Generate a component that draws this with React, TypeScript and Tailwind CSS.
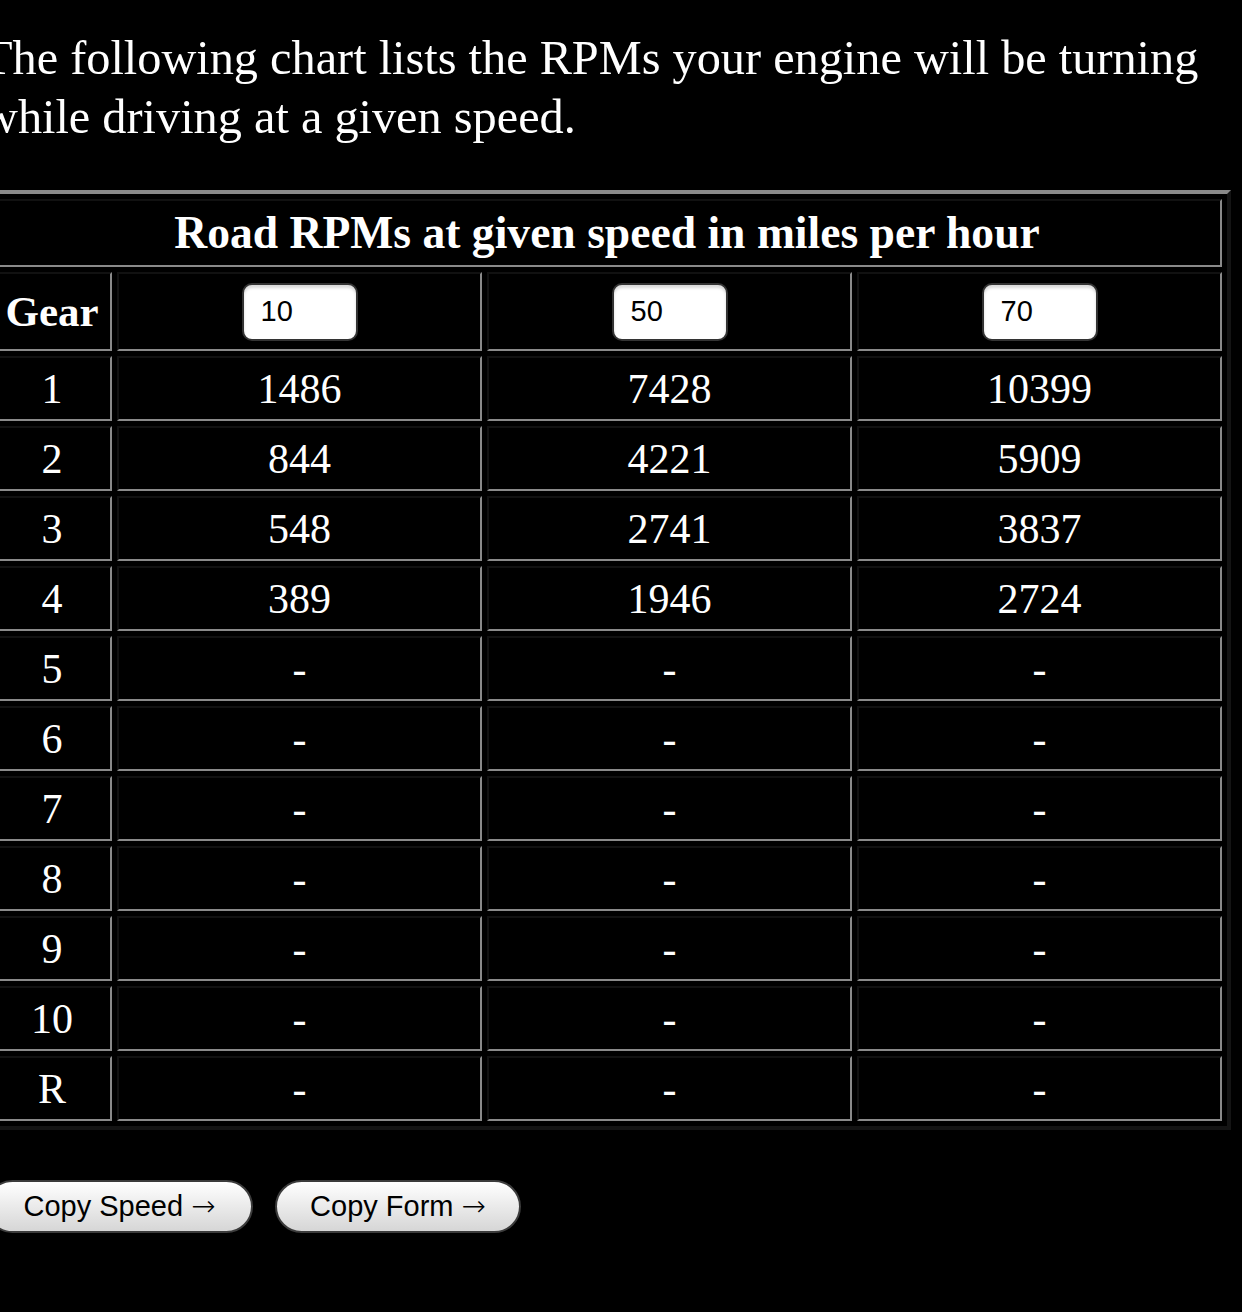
const speeds = ["10", "50", "70"];

const rows = [
  { gear: "1", rpm: ["1486", "7428", "10399"] },
  { gear: "2", rpm: ["844", "4221", "5909"] },
  { gear: "3", rpm: ["548", "2741", "3837"] },
  { gear: "4", rpm: ["389", "1946", "2724"] },
  { gear: "5", rpm: ["-", "-", "-"] },
  { gear: "6", rpm: ["-", "-", "-"] },
  { gear: "7", rpm: ["-", "-", "-"] },
  { gear: "8", rpm: ["-", "-", "-"] },
  { gear: "9", rpm: ["-", "-", "-"] },
  { gear: "10", rpm: ["-", "-", "-"] },
  { gear: "R", rpm: ["-", "-", "-"] },
];

// inset-looking cell border: dark top/left, grey bottom/right
const cell =
  "border-2 border-t-[#111] border-l-[#111] border-r-[#8a8a8a] border-b-[#8a8a8a] p-0 text-center align-middle";

function PillButton({ label, width }: { label: string; width: string }) {
  return (
    <button
      type="button"
      className={`${width} h-[53px] rounded-full border-2 border-[#3c3c3c] bg-linear-to-b from-white to-[#d6d6d6] text-[29px] leading-none text-black [font-family:'Liberation_Sans',sans-serif]`}
    >
      {label}{" "}
      <span className="font-extralight [font-family:'DejaVu_Sans',sans-serif]">→</span>
    </button>
  );
}

export default function App() {
  return (
    <div className="min-h-screen overflow-hidden bg-black text-white [font-family:'Liberation_Serif',serif]">
      <div className="ml-[-17px] w-[1248px] pt-[28px]">
        <p className="text-[48.3px] leading-[59px]">
          The following chart lists the RPMs your engine will be turning while
          driving at a given speed.
        </p>

        {/* RPM table */}
        <table className="mt-[44px] border-separate border-spacing-[5px] border-4 border-t-[#8a8a8a] border-l-[#8a8a8a] border-r-[#141414] border-b-[#141414] leading-[46px]">
          <tbody>
            <tr>
              <th colSpan={4} className={`${cell} h-[68px] text-[45.6px] font-bold`}>
                Road RPMs at given speed in miles per hour
              </th>
            </tr>
            <tr>
              <th className={`${cell} h-[79px] w-[120px] text-[43px] font-bold`}>Gear</th>
              {speeds.map((s) => (
                <td key={s} className={`${cell} w-[365px]`}>
                  <input
                    defaultValue={s}
                    className="h-[58px] w-[116px] rounded-[10px] border-2 border-[#333] bg-white pl-[17px] align-middle text-[29px] leading-none text-black shadow-[inset_0_3px_3px_rgba(0,0,0,0.15)] outline-none [font-family:'Liberation_Sans',sans-serif]"
                  />
                </td>
              ))}
            </tr>
            {rows.map((r) => (
              <tr key={r.gear}>
                <td className={`${cell} h-[65px] text-[42px]`}>{r.gear}</td>
                {r.rpm.map((v, i) => (
                  <td key={i} className={`${cell} text-[42px]`}>
                    {v}
                  </td>
                ))}
              </tr>
            ))}
          </tbody>
        </table>

        <div className="mt-[50px] flex gap-[22px] pl-[3px]">
          <PillButton label="Copy Speed" width="w-[267px]" />
          <PillButton label="Copy Form" width="w-[246px]" />
        </div>
      </div>
    </div>
  );
}
